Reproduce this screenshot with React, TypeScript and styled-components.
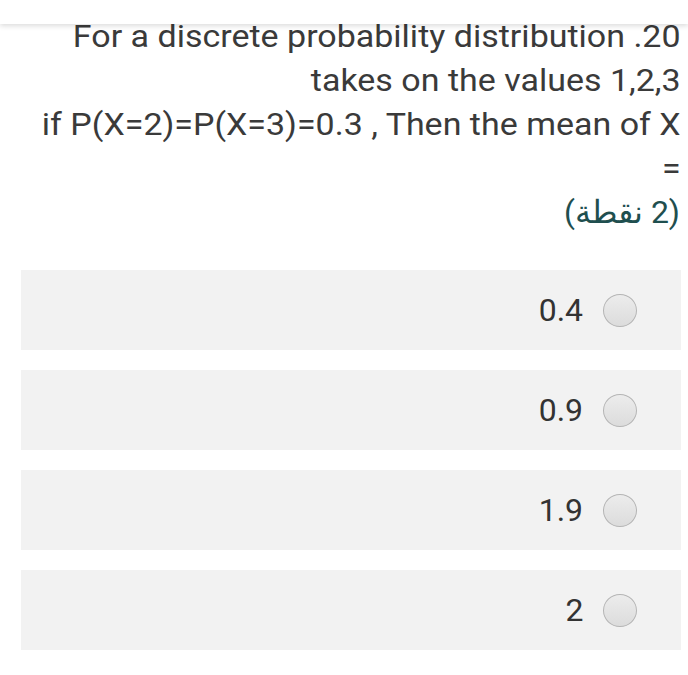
import React, { FC } from 'react'
import styled, { createGlobalStyle } from 'styled-components';

const GlobalStyle = createGlobalStyle`
    html, body {
        margin: 0;
        padding: 0;
        background: #ffffff;
    }
    body {
        font-family: Roboto, "Liberation Sans", sans-serif;
    }
`;

const Page = styled.div`
    position: relative;
    width: 688px;
    height: 675px;
    overflow: hidden;
    background: #ffffff;
    padding-top: 14px;
    box-sizing: border-box;
`;

const TopBar = styled.div`
    position: absolute;
    top: 0;
    left: 0;
    right: 0;
    height: 24px;
    background: #ffffff;
    box-shadow: 0 2px 5px rgba(0, 0, 0, 0.14);
`;

// the screenshot is a little stretched sideways, so the text is too
const Question = styled.div`
    padding-right: 7px;
    text-align: right;
    font-size: 32px;
    line-height: 44px;
    color: #3a3a3a;
    transform: scaleX(1.062);
    transform-origin: right center;
`;

const Points = styled.div`
    padding-right: 8px;
    text-align: right;
    font-size: 32px;
    line-height: 44px;
    color: #1f4f4f;
`;

const OptionList = styled.div`
    display: flex;
    flex-direction: column;
    gap: 20px;
    margin: 36px 7px 0 21px;
`;

const Option = styled.div`
    display: flex;
    align-items: center;
    justify-content: flex-end;
    gap: 20px;
    height: 80px;
    padding-right: 44px;
    background: #f2f2f2;
    font-size: 31px;
    color: #333333;
`;

const Label = styled.span`
    display: inline-block;
    transform: scaleX(1.03);
    transform-origin: right center;
`;

const Radio = styled.span`
    width: 32px;
    height: 31px;
    border-radius: 50%;
    border: 1px solid #b4b4b4;
    background: linear-gradient(#ececec, #dcdcdc);
`;

const options = ['0.4', '0.9', '1.9', '2'];

const App: FC = () => {
    return (
        <Page>
            <GlobalStyle />
            <Question>
                For a discrete probability distribution .20<br />
                takes on the values 1,2,3<br />
                if P(X=2)=P(X=3)=0.3 , Then the mean of X<br />
                =
            </Question>
            <Points dir='rtl'>(2 نقطة)</Points>
            <OptionList>
                {options.map((o) => (
                    <Option key={o}>
                        <Label>{o}</Label>
                        <Radio />
                    </Option>
                ))}
            </OptionList>
            <TopBar />
        </Page>
    )
}

export default App;
